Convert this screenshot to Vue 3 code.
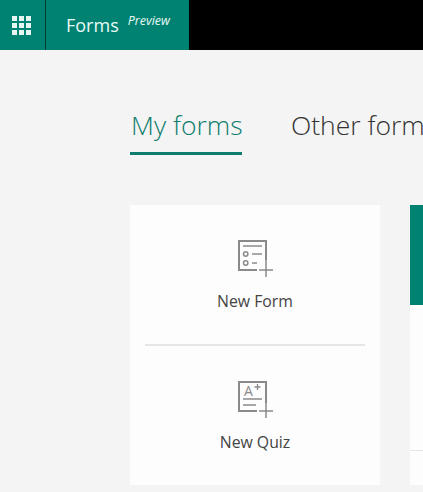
<template>
    <div class="page">
        <header class="topBar">
            <div class="waffle">
                <div class="waffleGrid">
                    <span v-for="n in 9" :key="n"></span>
                </div>
            </div>
            <div class="brand">
                <span class="brandName">Forms</span>
                <span class="brandTag">Preview</span>
            </div>
        </header>

        <main class="content">
            <nav class="tabs">
                <div class="tab active">My forms</div>
                <div class="tab">Other forms</div>
            </nav>

            <div class="cards">
                <section class="newCard">
                    <div class="newItem">
                        <svg class="newIcon" width="36" height="38" viewBox="0 0 36 38" fill="none" stroke="#8a8a8a">
                            <path stroke-width="2" d="M29 21V2H2v29h18" />
                            <path stroke-width="1.5" d="M6 7h19M15 15h10M15 24h5" />
                            <circle cx="8.7" cy="15" r="2.2" stroke-width="1.5" />
                            <circle cx="8.7" cy="24" r="2.2" stroke-width="1.5" />
                            <path stroke-width="1.5" d="M29 21v17M22 31h14" />
                        </svg>
                        <div class="newLabel">New Form</div>
                    </div>
                    <div class="divider"></div>
                    <div class="newItem">
                        <svg class="newIcon" width="36" height="38" viewBox="0 0 36 38" fill="none" stroke="#8a8a8a">
                            <path stroke-width="2" d="M29 23V2H2v29h18" />
                            <text x="7" y="16" class="quizLetter">A</text>
                            <path stroke-width="1.3" d="M20.5 4v6M17.5 7h6" />
                            <path stroke-width="1.5" d="M6 19h19M6 25h13" />
                            <path stroke-width="1.5" d="M29 23v15M22 31h14" />
                        </svg>
                        <div class="newLabel">New Quiz</div>
                    </div>
                </section>

                <section class="formCard">
                    <div class="formCover"></div>
                    <div class="formBody"></div>
                    <div class="formFooter"></div>
                </section>
            </div>
        </main>
    </div>
</template>

<script setup>
</script>

<style>
html, body {
    overflow: hidden;
}
</style>

<style scoped>
.page {
    width: 423px;
    height: 492px;
    overflow: hidden;
    background-color: #f4f4f4;
    font-family: "Open Sans", sans-serif;
}

.topBar {
    display: flex;
    height: 50px;
    background-color: #000;
}

.waffle {
    display: flex;
    align-items: center;
    justify-content: center;
    width: 43px;
    padding-right: 2px;
    background-color: #008272;
    border-right: 1px solid #0b3d37;
}

.waffleGrid {
    display: grid;
    grid-template-columns: repeat(3, 5px);
    grid-auto-rows: 5px;
    gap: 2px;
}

.waffleGrid span {
    background-color: #e8f6f3;
}

.brand {
    display: flex;
    width: 143px;
    padding-left: 20px;
    box-sizing: border-box;
    background-color: #008272;
    color: #eafaf6;
}

.brandName {
    margin-top: 13px;
    font-size: 18px;
    line-height: 25px;
}

.brandTag {
    margin: 13px 0 0 9px;
    font-size: 12.5px;
    line-height: 16px;
    font-style: italic;
}

.content {
    padding: 54px 0 0 130px;
}

.tabs {
    display: flex;
    gap: 48px;
    white-space: nowrap;
}

.tab {
    height: 51px;
    padding: 0 1px;
    font-size: 26.5px;
    font-weight: 300;
    line-height: 42px;
    color: #333;
    box-sizing: border-box;
}

.tab.active {
    width: 112px;
    color: #0f7c6e;
    border-bottom: 3px solid #0f7c6e;
}

.cards {
    display: flex;
    gap: 30px;
    margin-top: 50px;
}

.newCard {
    flex: none;
    width: 250px;
    height: 280px;
    padding: 0 15px;
    box-sizing: border-box;
    background-color: #fdfdfd;
}

.newItem {
    display: flex;
    flex-direction: column;
    align-items: center;
    height: 139px;
    padding-top: 34px;
    box-sizing: border-box;
}

.newIcon {
    flex: none;
}

.quizLetter {
    font-family: "Open Sans", sans-serif;
    font-size: 14px;
    fill: #8a8a8a;
    stroke: none;
}

.newLabel {
    margin-top: 14px;
    font-size: 15.8px;
    line-height: 20px;
    color: #444;
}

.divider {
    height: 2px;
    background-color: #e6e6e6;
}

.formCard {
    flex: none;
    width: 250px;
    height: 280px;
    display: flex;
    flex-direction: column;
    background-color: #fdfdfd;
}

.formCover {
    height: 100px;
    background-color: #008272;
}

.formBody {
    height: 145px;
}

.formFooter {
    flex: 1;
    border-top: 1px solid #e6e6e6;
}
</style>
